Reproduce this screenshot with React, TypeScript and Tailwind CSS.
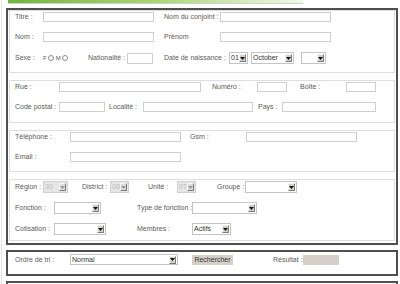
import React from "react";

const Label = ({ w, children, ml = "" }: { w: string; children?: React.ReactNode; ml?: string }) => (
  <span className={`${w} ${ml} shrink-0 whitespace-nowrap text-[#5a5a5a] leading-[10px]`}>{children}</span>
);

const Input = ({ w, h = "h-[10px]" }: { w: string; h?: string }) => (
  <span className={`${w} ${h} shrink-0 border border-[#cfcfcf] bg-white`} />
);

const Arrow = ({ disabled }: { disabled?: boolean }) => (
  <span
    className={`w-[7px] h-[8px] mr-px shrink-0 flex items-center justify-center border border-t-[#f4f4f4] border-l-[#f4f4f4] border-r-[#7a7a7a] border-b-[#7a7a7a] ${
      disabled ? "bg-[#dcdcdc]" : "bg-[#d4d0c8]"
    }`}
  >
    <svg width="5" height="3" viewBox="0 0 5 3">
      <path d="M0 0H5L2.5 3Z" fill={disabled ? "#9a9a9a" : "#111"} />
    </svg>
  </span>
);

const Select = ({ w, value = "", disabled, h = "h-[12px]" }: { w: string; value?: string; disabled?: boolean; h?: string }) => (
  <span
    className={`${w} ${h} shrink-0 flex items-center border ${
      disabled ? "border-[#d0d0d0] bg-[#e6e6e6] text-[#bdbdbd]" : "border-[#c4c4c4] bg-white text-[#333]"
    }`}
  >
    <span className="flex-1 min-w-0 pl-px whitespace-nowrap leading-[10px]">{value}</span>
    <Arrow disabled={disabled} />
  </span>
);

const Radio = () => <span className="w-[6px] h-[6px] rounded-full border border-[#8a8a8a] bg-white shrink-0" />;

const Row = ({ h = "h-[20px]", inner = "h-[10px]", children }: { h?: string; inner?: string; children: React.ReactNode }) => (
  <div className={`${h} pt-px`}>
    <div className={`${inner} flex items-center`}>{children}</div>
  </div>
);

export default function App() {
  return (
    <div
      className="w-[400px] h-[284px] overflow-hidden bg-white text-[7px] pl-px"
      style={{ fontFamily: '"Liberation Sans", Arial, sans-serif' }}
    >
      <div className="h-full border-l border-[#e2e2e2] pl-[4px]">
        <div className="ml-[2px] w-[295px] h-[3px] bg-linear-to-r from-[#72b43c] via-[#a9d671] to-[#f1f8e8]" />
        <div className="ml-[2px] w-[295px] h-px bg-[#cfcfcf]" />
        <div className="h-[4px]" />

        {/* Main panel */}
        <div className="w-[392px] border-2 border-[#4f4f4f] px-px pb-[2px]">
          {/* Section 1 */}
          <div className="border border-[#dedede] pl-[5px] pb-px">
            <Row>
              <Label w="w-[28px]">Titre :</Label>
              <Input w="w-[111px]" />
              <Label w="w-[56px]" ml="ml-[10px]">Nom du conjoint :</Label>
              <Input w="w-[111px]" />
            </Row>
            <Row>
              <Label w="w-[28px]">Nom :</Label>
              <Input w="w-[111px]" />
              <Label w="w-[56px]" ml="ml-[10px]">Prénom</Label>
              <Input w="w-[111px]" />
            </Row>
            <Row inner="h-[12px]">
              <Label w="w-[28px]">Sexe :</Label>
              <span className="w-[45px] shrink-0 flex items-center gap-[1px] text-[#5a5a5a] text-[6px]">
                <span>F</span>
                <Radio />
                <span className="ml-[1px]">M</span>
                <Radio />
              </span>
              <Label w="w-[39px]">Nationalité :</Label>
              <Input w="w-[26px]" h="h-[11px]" />
              <Label w="w-[65px]" ml="ml-[11px]">Date de naissance :</Label>
              <Select w="w-[19px]" value="01" />
              <span className="w-[3px] shrink-0" />
              <Select w="w-[43px]" value="October" />
              <span className="w-[7px] shrink-0" />
              <Select w="w-[25px]" />
            </Row>
          </div>

          {/* Section 2 */}
          <div className="mt-[7px] border border-[#dedede] pl-[5px] pb-px">
            <Row>
              <Label w="w-[44px]">Rue :</Label>
              <Input w="w-[142px]" />
              <Label w="w-[45px]" ml="ml-[11px]">Numéro :</Label>
              <Input w="w-[30px]" />
              <Label w="w-[46px]" ml="ml-[13px]">Boîte :</Label>
              <Input w="w-[30px]" />
            </Row>
            <Row>
              <Label w="w-[44px]">Code postal :</Label>
              <Input w="w-[46px]" />
              <Label w="w-[34px]" ml="ml-[4px]">Localité :</Label>
              <Input w="w-[110px]" />
              <Label w="w-[24px]" ml="ml-[5px]">Pays :</Label>
              <Input w="w-[94px]" />
            </Row>
          </div>

          {/* Section 3 */}
          <div className="mt-[7px] border border-[#dedede] pl-[5px]">
            <Row>
              <Label w="w-[55px]">Téléphone :</Label>
              <Input w="w-[111px]" />
              <Label w="w-[56px]" ml="ml-[9px]">Gsm :</Label>
              <Input w="w-[111px]" />
            </Row>
            <Row>
              <Label w="w-[55px]">Email :</Label>
              <Input w="w-[111px]" />
            </Row>
          </div>

          {/* Section 4 */}
          <div className="mt-[7px] border border-[#dedede] pl-[5px]">
            <Row h="h-[21px]" inner="h-[12px]">
              <Label w="w-[28px]">Région :</Label>
              <Select w="w-[25px]" value="30" disabled />
              <Label w="w-[28px]" ml="ml-[14px]">District :</Label>
              <Select w="w-[19px]" value="08" disabled />
              <Label w="w-[29px]" ml="ml-[19px]">Unité :</Label>
              <Select w="w-[19px]" value="07" disabled />
              <Label w="w-[28px]" ml="ml-[21px]">Groupe :</Label>
              <Select w="w-[52px]" />
            </Row>
            <Row h="h-[21px]" inner="h-[12px]">
              <Label w="w-[39px]">Fonction :</Label>
              <Select w="w-[47px]" />
              <Label w="w-[55px]" ml="ml-[36px]">Type de fonction :</Label>
              <Select w="w-[65px]" />
            </Row>
            <Row h="h-[18px]" inner="h-[12px]">
              <Label w="w-[39px]">Cotisation :</Label>
              <Select w="w-[52px]" />
              <Label w="w-[55px]" ml="ml-[31px]">Membres :</Label>
              <Select w="w-[39px]" value="Actifs" />
            </Row>
          </div>
        </div>

        {/* Sort panel */}
        <div className="mt-[5px] w-[392px] h-[26px] border-2 border-[#4f4f4f] pl-[7px] pt-[2px]">
          <div className="h-[11px] flex items-center">
            <Label w="w-[55px]">Ordre de tri :</Label>
            <Select w="w-[108px]" value="Normal" h="h-[11px]" />
            <span className="ml-[14px] w-[41px] h-[10px] shrink-0 bg-[#d4d0c8] text-[#333] leading-[10px] text-center">
              Rechercher
            </span>
            <Label w="w-[30px]" ml="ml-[40px]">Résultat :</Label>
            <span className="w-[36px] h-[10px] shrink-0 bg-[#d4d0c8]" />
          </div>
        </div>

        {/* Next panel */}
        <div className="mt-[5px] w-[392px] h-[20px] border-2 border-[#4f4f4f]" />
      </div>
    </div>
  );
}
